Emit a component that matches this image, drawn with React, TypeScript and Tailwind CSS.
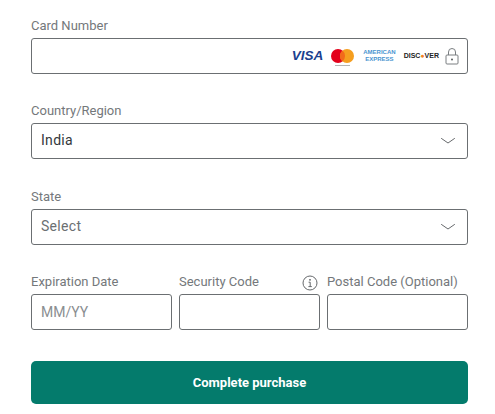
const Label = ({ text }: { text: string }) => (
  <label className="block text-[13px] leading-[18px] text-[#74787b]">{text}</label>
)

const Chevron = () => (
  <svg width="16" height="8" viewBox="0 0 16 8" fill="none" stroke="#66696c" strokeWidth="1" strokeLinecap="round" strokeLinejoin="round">
    <path d="M1.5 1.5 L8 6 L14.5 1.5" />
  </svg>
)

const Lock = () => (
  <svg width="14" height="17" viewBox="0 0 14 17" fill="none" stroke="#7a7e81" strokeWidth="1">
    <rect x="1" y="7" width="12" height="9" rx="1" />
    <path d="M3.5 7 V4 a3.5 3.5 0 0 1 7 0 V7" />
    <circle cx="7" cy="11.5" r="1" fill="#55595c" stroke="none" />
  </svg>
)

const Info = () => (
  <svg width="16" height="16" viewBox="0 0 16 16" fill="none" stroke="#66696c" strokeWidth="1">
    <circle cx="8" cy="8" r="7" />
    <path d="M6.6 7.2 H8.2 V11.6 M6.4 11.6 H9.8" />
    <circle cx="8" cy="4.8" r="0.9" fill="#55595c" stroke="none" />
  </svg>
)

const Mastercard = () => (
  <svg width="23" height="18" viewBox="0 0 23 18">
    <circle cx="7" cy="7" r="7" fill="#e3001b" />
    <circle cx="16" cy="7" r="7" fill="#f59e1f" />
    <path d="M11.5 1.6 a7 7 0 0 1 0 10.8 a7 7 0 0 1 0 -10.8" fill="#f26a1b" />
    <rect x="4" y="16" width="15" height="1" fill="#b5b5b5" />
  </svg>
)

const Select = ({ value, muted }: { value: string; muted?: boolean }) => (
  <div className="h-9 border border-[#6b6f72] rounded-[3px] flex items-center justify-between pl-[9px] pr-[11px]">
    <span className={muted ? 'pb-[2px] text-sm tracking-[0.3px] text-[#6b6f72]' : 'pb-[2px] text-sm tracking-[0.3px] text-[#33383b]'}>{value}</span>
    <Chevron />
  </div>
)

export default function App() {
  return (
    <div className="w-[495px] h-[414px] bg-white pl-[31px] pr-[27px] pt-[17px] font-['Roboto',sans-serif] overflow-hidden">
      <Label text="Card Number" />
      <div className="mt-[3px] h-9 border border-[#6b6f72] rounded-[3px] flex items-center justify-end pr-2">
        <span className="text-[13.5px] font-bold italic text-[#1a3f8f] font-['Liberation_Sans',sans-serif] leading-none">VISA</span>
        <div className="ml-[8px] mt-[3px]"><Mastercard /></div>
        <div className="ml-[9px] flex flex-col items-center text-[#4a94cf] text-[6px] font-bold leading-[7px] font-['Liberation_Sans',sans-serif]">
          <span>AMERICAN</span>
          <span>EXPRESS</span>
        </div>
        <span className="ml-[8px] text-[7px] font-bold text-[#222] font-['Liberation_Sans',sans-serif]">
          DISC<span className="text-[#f58220]">●</span>VER
        </span>
        <div className="ml-[6px]"><Lock /></div>
      </div>

      <div className="mt-[28px]">
        <Label text="Country/Region" />
        <div className="mt-[3px]">
          <Select value="India" />
        </div>
      </div>

      <div className="mt-[29px]">
        <Label text="State" />
        <div className="mt-[3px]">
          <Select value="Select" muted />
        </div>
      </div>

      <div className="mt-[28px] grid grid-cols-3 gap-[7px]">
        <div>
          <Label text="Expiration Date" />
          <div className="mt-[3px] h-9 border border-[#6b6f72] rounded-[3px] flex items-center pl-[9px] text-sm text-[#8a8e91]">MM/YY</div>
        </div>
        <div>
          <div className="flex items-start justify-between">
            <Label text="Security Code" />
            <div className="pt-[2px] mr-[2px]"><Info /></div>
          </div>
          <div className="mt-[3px] h-9 border border-[#6b6f72] rounded-[3px]" />
        </div>
        <div>
          <Label text="Postal Code (Optional)" />
          <div className="mt-[3px] h-9 border border-[#6b6f72] rounded-[3px]" />
        </div>
      </div>

      <button className="mt-[31px] w-full h-[43px] rounded-[5px] bg-[#047b6c] text-white text-[13px] font-bold">Complete purchase</button>
    </div>
  )
}
